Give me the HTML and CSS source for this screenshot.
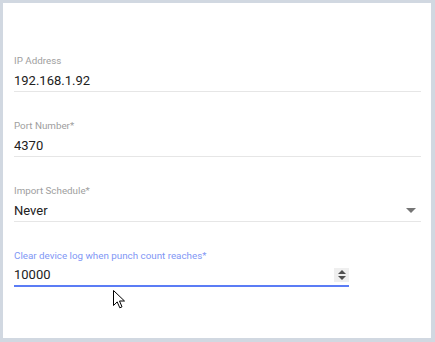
FILE: index.html
```html
<!DOCTYPE html>
<html lang="en">
<head>
  <meta charset="UTF-8" />
  <meta name="viewport" content="width=device-width, initial-scale=1.0" />
  <title>Device Settings</title>
  <link rel="stylesheet" href="styles.css">
</head>
<body>
  <div class="panel">
    <form class="form">
      <div class="field">
        <label>IP Address</label>
        <div class="control"><span class="value">192.168.1.92</span></div>
      </div>
      <div class="field">
        <label>Port Number*</label>
        <div class="control"><span class="value">4370</span></div>
      </div>
      <div class="field">
        <label>Import Schedule*</label>
        <div class="control">
          <span class="value">Never</span>
          <span class="caret"></span>
        </div>
      </div>
      <div class="field focused short">
        <label>Clear device log when punch count reaches*</label>
        <div class="control">
          <span class="value">10000</span>
          <span class="spinner"><i class="up"></i><i class="down"></i></span>
        </div>
      </div>
    </form>
    <svg class="pointer" width="13" height="19" viewBox="0 0 13 19">
      <path d="M0.5 0.5 L0.5 15.5 L4.2 11.9 L6.8 17.8 L9 16.8 L6.5 11 L11.5 11 Z" fill="#fff" stroke="#000" stroke-width="1" stroke-linejoin="miter"/>
    </svg>
  </div>
</body>
</html>
```

FILE: styles.css
```css
body {
  margin: 0;
  padding: 3px 4px 4px 3px;
  background: #d1d8e1;
  font-family: Roboto, 'Noto Sans', Arial, sans-serif;
}
.panel {
  position: relative;
  height: 335px;
  background: #fff;
}
.form {
  display: flex;
  flex-direction: column;
  gap: 27px;
  padding: 51px 10px 0 11px;
}
.field label {
  display: block;
  font-size: 9.8px;
  line-height: 14px;
  color: #9e9e9e;
  margin-bottom: 3px;
}
.control {
  display: flex;
  align-items: center;
  justify-content: space-between;
  height: 19px;
  padding-bottom: 1px;
  border-bottom: 1px solid #e6e6e6;
}
.value {
  font-size: 13px;
  line-height: 18px;
  color: #212121;
}
.caret {
  width: 0;
  height: 0;
  margin-right: 5px;
  border-left: 5px solid transparent;
  border-right: 5px solid transparent;
  border-top: 5px solid #757575;
}
.field.short {
  width: 335px;
}
.field.focused label {
  color: #7f97f5;
}
.field.focused .control {
  border-bottom: 2px solid #5b7cf5;
  height: 18px;
}
.spinner {
  display: flex;
  flex-direction: column;
  align-items: center;
  justify-content: center;
  gap: 2px;
  width: 15px;
  height: 14px;
  background: #efefef;
}
.spinner i {
  width: 0;
  height: 0;
  border-left: 4px solid transparent;
  border-right: 4px solid transparent;
}
.spinner .up {
  border-bottom: 4px solid #505050;
}
.spinner .down {
  border-top: 4px solid #505050;
}
.pointer {
  position: absolute;
  left: 110px;
  top: 287px;
}
```
